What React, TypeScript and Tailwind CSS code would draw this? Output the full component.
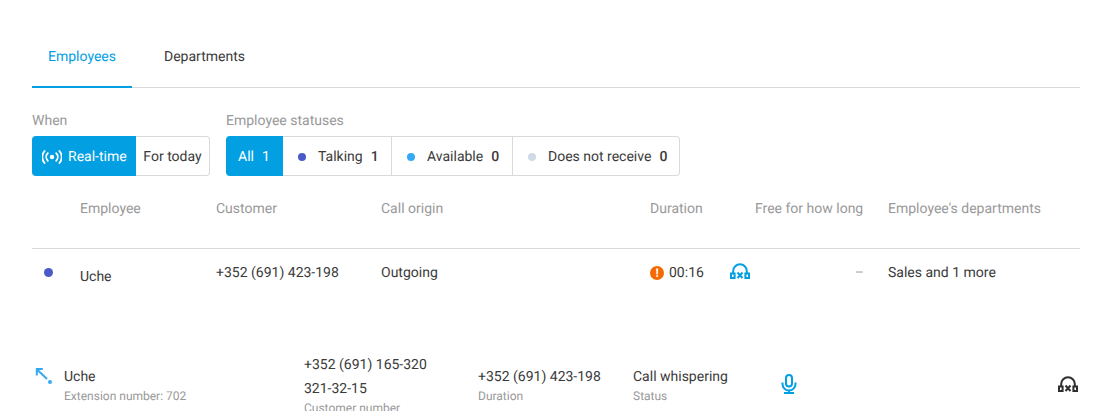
const HeadsetX = ({ className }: { className: string }) => (
  <svg viewBox="0 0 20 16" fill="none" className={className}>
    <path d="M3.2 10V8a6.8 6.8 0 0 1 13.6 0v2" stroke="currentColor" strokeWidth="2" />
    <rect x="1" y="10.5" width="3.6" height="4.5" stroke="currentColor" strokeWidth="2" />
    <rect x="15.4" y="10.5" width="3.6" height="4.5" stroke="currentColor" strokeWidth="2" />
    <path d="M7.5 9.5l5 5.5M12.5 9.5l-5 5.5" stroke="currentColor" strokeWidth="2" />
  </svg>
);

const Mic = () => (
  <svg viewBox="0 0 16 20" fill="none" className="w-4 h-5 text-[#02a0e3]">
    <rect x="5" y="1" width="6" height="11.5" rx="3" stroke="currentColor" strokeWidth="2" />
    <path d="M1.5 8.5v1.5a6.5 6.5 0 0 0 13 0V8.5M8 16.5V19M3 19h10" stroke="currentColor" strokeWidth="2" />
  </svg>
);

const Broadcast = () => (
  <svg viewBox="0 0 20 14" fill="none" className="w-5 h-[14px] text-white">
    <circle cx="10" cy="7" r="2.2" fill="currentColor" />
    <path d="M5.8 3.2a5.5 5.5 0 0 0 0 7.6M14.2 3.2a5.5 5.5 0 0 1 0 7.6M2.6 1a9 9 0 0 0 0 12M17.4 1a9 9 0 0 1 0 12" stroke="currentColor" strokeWidth="1.8" strokeLinecap="round" />
  </svg>
);

const statuses = [
  { label: 'Talking', count: 1, dot: 'bg-[#4a5ac9]', cell: 'w-[109px]' },
  { label: 'Available', count: 0, dot: 'bg-[#35a9f5]', cell: 'w-[121px]' },
  { label: 'Does not receive', count: 0, dot: 'bg-[#d0d9e6]', cell: 'w-[166px]' },
];

export default function App() {
  return (
    <div className="h-[411px] overflow-hidden bg-white px-8 pt-[26px] font-['Roboto',sans-serif] text-sm text-[#3a3a3a] antialiased [text-rendering:geometricPrecision]">
      {/* Tabs */}
      <div className="flex h-[62px] border-b border-[#d9d9d9]">
        <div className="w-[100px] h-[62px] pt-[2px] border-b-2 border-[#02a0e3] text-[#02a0e3] flex items-center justify-center">Employees</div>
        <div className="ml-8 h-[61px] flex items-center">Departments</div>
      </div>

      {/* Filters */}
      <div className="flex gap-4 mt-[23px]">
        <div>
          <p className="h-[18px] leading-[20px] text-[#999]">When</p>
          <div className="flex mt-[7px] h-10">
            <div className="w-[104px] pt-[2px] bg-[#02a0e3] rounded-l text-white flex items-center pl-[10px] gap-[6px]">
              <Broadcast />
              Real-time
            </div>
            <div className="w-[74px] pt-[2px] border border-l-0 border-[#d9d9d9] rounded-r flex items-center justify-center">For today</div>
          </div>
        </div>
        <div>
          <p className="h-[18px] leading-[20px] text-[#999]">Employee statuses</p>
          <div className="flex mt-[7px] h-10">
            <div className="w-[57px] pt-[2px] bg-[#02a0e3] rounded-l text-white flex items-center pl-3 gap-2">
              <span>All</span><span>1</span>
            </div>
            <div className="flex border border-l-0 border-[#d9d9d9] rounded-r divide-x divide-[#d9d9d9]">
              {statuses.map((s) => (
                <div key={s.label} className={`${s.cell} pt-[2px] flex items-center pl-[15px]`}>
                  <span className={`w-2 h-2 rounded-full ${s.dot}`} />
                  <span className="ml-3">{s.label}</span>
                  <span className="ml-2 font-medium">{s.count}</span>
                </div>
              ))}
            </div>
          </div>
        </div>
      </div>

      {/* Table */}
      <div className="grid grid-cols-[48px_136px_165px_269px_105px_133px_1fr] h-[73px] border-b border-[#d9d9d9] text-[#999] pt-[25px] leading-[16px]">
        <div />
        <div>Employee</div>
        <div>Customer</div>
        <div>Call origin</div>
        <div>Duration</div>
        <div>Free for how long</div>
        <div>Employee's departments</div>
      </div>
      <div className="grid grid-cols-[48px_136px_165px_269px_105px_133px_1fr] h-[48px] items-center">
        <div className="pl-3"><span className="block w-[9px] h-[9px] mb-[2px] rounded-full bg-[#4a5ac9]" /></div>
        <div className="pt-2">Uche</div>
        <div>+352 (691) 423-198</div>
        <div>Outgoing</div>
        <div className="flex items-center relative">
          <span className="w-[14px] h-[14px] rounded-full bg-[#f56a00] text-white text-xs font-bold leading-[14px] text-center">!</span>
          <span className="ml-[5px]">00:16</span>
          <HeadsetX className="absolute left-[80px] top-0 w-5 h-4 text-[#02a0e3]" />
        </div>
        <div className="text-right pr-6 text-[#aaa]">–</div>
        <div>Sales and 1 more</div>
      </div>

      {/* Active call */}
      <div className="flex mt-[54px] relative">
        <svg viewBox="0 0 20 18" fill="none" className="w-5 h-[18px] mt-[15px] text-[#35a9f5]">
          <path d="M5 3.5l10 9.5M4.8 9.5V3h6" stroke="currentColor" strokeWidth="2" />
          <circle cx="18" cy="16" r="2" fill="currentColor" />
        </svg>
        <div className="ml-3 w-[240px] pt-[17px]">
          <p className="leading-[18px]">Uche</p>
          <p className="text-xs leading-[14px] mt-[3px] text-[#999]">Extension number: 702</p>
        </div>
        <div className="w-[174px] pt-[2px]">
          <p className="leading-[24px]">+352 (691) 165-320</p>
          <p className="leading-[24px]">321-32-15</p>
          <p className="text-xs leading-[14px] text-[#999]">Customer number</p>
        </div>
        <div className="w-[155px] pt-[17px]">
          <p className="leading-[18px]">+352 (691) 423-198</p>
          <p className="text-xs leading-[14px] mt-[3px] text-[#999]">Duration</p>
        </div>
        <div className="w-[148px] pt-[17px]">
          <p className="leading-[18px]">Call whispering</p>
          <p className="text-xs leading-[14px] mt-[3px] text-[#999]">Status</p>
        </div>
        <div className="pt-[23px]"><Mic /></div>
        <div className="ml-auto pt-[25px] pr-[2px]"><HeadsetX className="w-5 h-4 text-[#2f2f2f]" /></div>
      </div>
    </div>
  );
}
